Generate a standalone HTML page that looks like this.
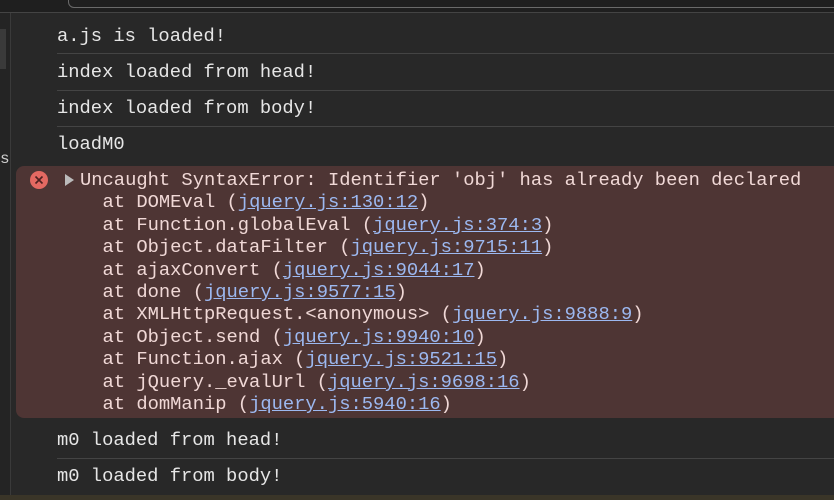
<!DOCTYPE html>
<html><head><style>
body{margin:0;width:834px;height:500px;background:#282828;overflow:hidden;position:relative;font-family:"Liberation Mono",monospace;font-size:18.8px;color:#e6e6e6}
.top{position:absolute;left:0;top:0;width:834px;height:12px;background:#1f1f1f;border-bottom:1px solid #444}
.inp{position:absolute;left:68px;top:-6px;width:780px;height:12px;border:1.5px solid #6a6a6a;border-radius:6px}
.side{position:absolute;left:0;top:13px;width:10px;height:487px;background:#242424;border-right:1px solid #3a3a3a}
.sb{position:absolute;left:0;top:16px;width:6px;height:40px;background:#3a3a3a}
.msg{position:absolute;left:57px;right:0;height:36px;line-height:36px;white-space:pre}
.div{position:absolute;left:57px;right:0;height:1px;background:#444}
.err{position:absolute;left:16px;top:166px;width:830px;height:252px;background:#4e3534;border-radius:8px}
.el{position:absolute;left:80px;white-space:pre;line-height:22.4px;color:#f0d8d6}
a{color:#9cb8f0;text-decoration:underline}
.ic{position:absolute;left:30px;top:171px;width:18px;height:18px;border-radius:50%;background:#e46962}
.tri{position:absolute;left:65px;top:174px;width:0;height:0;border-left:9px solid #bbb;border-top:6px solid transparent;border-bottom:6px solid transparent}
.bot{position:absolute;left:0;top:495px;width:834px;height:5px;background:#3a3528}
</style></head><body>
<div class="top"><div class="inp"></div></div>
<div class="side"><div class="sb"></div></div>
<div style="position:absolute;left:0;top:150px;font-size:16px;color:#ccc">s</div>
<div class="msg" style="top:18px">a.js is loaded!</div>
<div class="div" style="top:53px"></div>
<div class="msg" style="top:54px">index loaded from head!</div>
<div class="div" style="top:90px"></div>
<div class="msg" style="top:90px">index loaded from body!</div>
<div class="div" style="top:126px"></div>
<div class="msg" style="top:126px">loadM0</div>
<div class="err"></div>
<div class="ic"><svg width="18" height="18"><path d="M5.5 5.5L12.5 12.5M12.5 5.5L5.5 12.5" stroke="#4e2020" stroke-width="1.6"/></svg></div>
<div class="tri"></div>
<div class="el" style="top:169px">Uncaught SyntaxError: Identifier 'obj' has already been declared
  at DOMEval (<a>jquery.js:130:12</a>)
  at Function.globalEval (<a>jquery.js:374:3</a>)
  at Object.dataFilter (<a>jquery.js:9715:11</a>)
  at ajaxConvert (<a>jquery.js:9044:17</a>)
  at done (<a>jquery.js:9577:15</a>)
  at XMLHttpRequest.&lt;anonymous&gt; (<a>jquery.js:9888:9</a>)
  at Object.send (<a>jquery.js:9940:10</a>)
  at Function.ajax (<a>jquery.js:9521:15</a>)
  at jQuery._evalUrl (<a>jquery.js:9698:16</a>)
  at domManip (<a>jquery.js:5940:16</a>)</div>
<div class="msg" style="top:422px">m0 loaded from head!</div>
<div class="div" style="top:458px"></div>
<div class="msg" style="top:458px">m0 loaded from body!</div>
<div class="bot"></div>
</body></html>
